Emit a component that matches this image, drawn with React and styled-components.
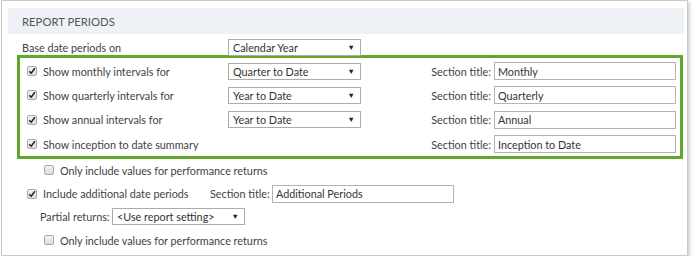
import React from 'react';
import styled, {createGlobalStyle} from 'styled-components';

const GlobalStyle = createGlobalStyle`
  body {
    margin: 0;
    background: #fff;
    font-family: 'Lato', 'Open Sans', sans-serif;
    font-size: 10.8px;
    color: #3f3f3f;
  }
`;

const Panel = styled.div`
  width: 676px;
  margin-left: 1px;
  border: 1px solid #c9c9c9;
  box-shadow: 2px 2px 3px rgba(0, 0, 0, 0.18);
  padding: 7px 3px 2px 6px;
  background: #fff;
`;

const Header = styled.div`
  height: 26px;
  display: flex;
  align-items: center;
  padding-left: 14px;
  background: #eef2f6;
  font-size: 11.3px;
  color: #555;
`;

const Row = styled.div`
  display: flex;
  align-items: center;
  height: ${props => props.h || 24}px;
  margin-top: ${props => props.mt || 0}px;
  padding-left: ${props => props.indent || 0}px;
`;

const Label = styled.span`
  width: ${props => (props.w ? `${props.w}px` : 'auto')};
  flex: none;
  white-space: nowrap;
`;

const Highlight = styled.div`
  margin-left: 9px;
  width: 653px;
  border: 3px solid #5fa82a;
  padding: 1px 0 0 7px;
`;

const Box = styled.span`
  width: 10px;
  height: 10px;
  flex: none;
  box-sizing: border-box;
  border: 1px solid #a9a9a9;
  border-radius: 2px;
  background: linear-gradient(#f2f2f2, #dcdcdc);
  margin-right: 6px;
  display: flex;
  align-items: center;
  justify-content: center;
`;

const Check = ({checked}) => (
  <Box>
    {checked && (
      <svg width="8" height="8" viewBox="0 0 8 8">
        <path d="M1.2 4.2 L3.2 6.2 L6.9 1.3" fill="none" stroke="#222" strokeWidth="1.5" />
      </svg>
    )}
  </Box>
);

const SelectBox = styled.div`
  width: ${props => props.w}px;
  height: 17px;
  box-sizing: border-box;
  border: 1px solid #acacac;
  display: flex;
  align-items: center;
  justify-content: space-between;
  padding: 0 5px 0 4px;
  color: #333;
  background: #fff;
  flex: none;
`;

const Arrow = styled.span`
  font-size: 7.5px;
  color: #222;
`;

const Select = ({w, value}) => (
  <SelectBox w={w}>
    <span>{value}</span>
    <Arrow>▼</Arrow>
  </SelectBox>
);

const TitleLabel = styled.span`
  margin-left: auto;
  margin-right: 3px;
  white-space: nowrap;
`;

const TextBox = styled.div`
  width: ${props => props.w}px;
  height: 18px;
  box-sizing: border-box;
  border: 1px solid #b4b4b4;
  padding-left: 3px;
  display: flex;
  align-items: center;
  color: #333;
  flex: none;
  margin-right: ${props => props.mr || 0}px;
`;

const intervals = [
  {label: 'Show monthly intervals for', value: 'Quarter to Date', title: 'Monthly'},
  {label: 'Show quarterly intervals for', value: 'Year to Date', title: 'Quarterly'},
  {label: 'Show annual intervals for', value: 'Year to Date', title: 'Annual'},
  {label: 'Show inception to date summary', title: 'Inception to Date'},
];

export default function App() {
  return (
    <>
      <GlobalStyle />
      <Panel>
        <Header>REPORT PERIODS</Header>
        <Row indent={14} h={16} mt={5}>
          <Label w={206}>Base date periods on</Label>
          <Select w={133} value="Calendar Year" />
        </Row>
        <Highlight>
          {intervals.map(item => (
            <Row key={item.label} h={24.3}>
              <Check checked />
              <Label w={185}>{item.label}</Label>
              {item.value && <Select w={133} value={item.value} />}
              <TitleLabel>Section title:</TitleLabel>
              <TextBox w={182} mr={4}>{item.title}</TextBox>
            </Row>
          ))}
        </Highlight>
        <Row indent={36} h={22}>
          <Check />
          <Label>Only include values for performance returns</Label>
        </Row>
        <Row indent={19} h={25}>
          <Check checked />
          <Label w={167}>Include additional date periods</Label>
          <Label w={62}>Section title:</Label>
          <TextBox w={182}>Additional Periods</TextBox>
        </Row>
        <Row indent={32} h={21}>
          <Label w={72}>Partial returns:</Label>
          <Select w={133} value="<Use report setting>" />
        </Row>
        <Row indent={36} h={26}>
          <Check />
          <Label>Only include values for performance returns</Label>
        </Row>
      </Panel>
    </>
  );
}
